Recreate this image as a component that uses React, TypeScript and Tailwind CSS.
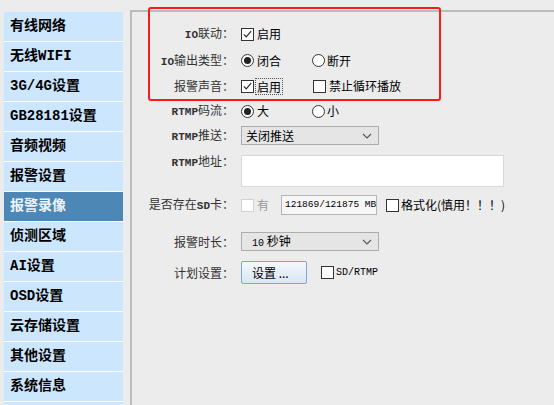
import type { ReactNode } from "react";

const navItems = [
  "有线网络",
  "无线WIFI",
  "3G/4G设置",
  "GB28181设置",
  "音频视频",
  "报警设置",
  "报警录像",
  "侦测区域",
  "AI设置",
  "OSD设置",
  "云存储设置",
  "其他设置",
  "系统信息",
];

function Latin({ children }: { children: ReactNode }) {
  return <span className="font-['Liberation_Mono',monospace] text-[11px] font-bold">{children}</span>;
}

function Mono({ children }: { children: ReactNode }) {
  return <span className="font-['Liberation_Mono',monospace] text-[10px]">{children}</span>;
}

function Label({ children, className = "" }: { children: ReactNode; className?: string }) {
  return (
    <div className={`mr-[7px] w-[102px] shrink-0 text-right text-[12px] text-[#333] ${className}`}>{children}</div>
  );
}

function Check({ checked, disabled }: { checked?: boolean; disabled?: boolean }) {
  return (
    <span
      className={`inline-flex size-[13px] shrink-0 items-center justify-center border bg-white ${
        disabled ? "border-[#d2d2d2]" : "border-[#333]"
      }`}
    >
      {checked && (
        <svg viewBox="0 0 13 13" className="size-[11px]" aria-hidden>
          <path d="M2.2 6.4L5 9.3L10.8 2.6" stroke="#222" strokeWidth="1.3" fill="none" />
        </svg>
      )}
    </span>
  );
}

function Radio({ checked }: { checked?: boolean }) {
  return (
    <span className="inline-flex size-[13px] shrink-0 items-center justify-center rounded-full border border-[#333] bg-white">
      {checked && <span className="size-[7px] rounded-full bg-[#222]" />}
    </span>
  );
}

function Chevron() {
  return (
    <svg viewBox="0 0 10 6" className="h-[6px] w-[10px]" aria-hidden>
      <path d="M1 1L5 5L9 1" stroke="#555" strokeWidth="1.1" fill="none" />
    </svg>
  );
}

function Select({ children }: { children: ReactNode }) {
  return (
    <div className="flex h-[19px] w-[138px] items-center justify-between border border-[#adadad] bg-[#e5e5e5] pl-[4px] pr-[6px] text-[12px] text-black">
      <span>{children}</span>
      <Chevron />
    </div>
  );
}

export default function App() {
  return (
    <div className="flex h-[405px] w-[554px] overflow-hidden bg-[#ececec] font-['Noto_Sans_CJK_SC',sans-serif]">
      <nav className="ml-[3px] mt-[11px] flex w-[120px] shrink-0 flex-col border-l border-t border-[#e4ecf3] bg-[#cce6fd]">
        {navItems.map((item) => (
          <div
            key={item}
            className={`flex h-[30px] shrink-0 items-center border-b border-white pl-[6px] text-[14px] font-bold font-['Liberation_Mono','Noto_Sans_CJK_SC',monospace] ${
              item === "报警录像" ? "bg-[#4c87b5] text-[#eef4fa]" : "text-black"
            }`}
          >
            {item}
          </div>
        ))}
      </nav>

      <main className="relative ml-[7px] mt-[10px] flex flex-1 flex-col border-l-2 border-t-2 border-[#bcbcbc] pt-[9px]">
        <div className="flex h-[26px] items-center">
          <Label>
            <Latin>IO</Latin>联动：
          </Label>
          <div className="flex items-center gap-[3px] text-[12px]">
            <Check checked />
            启用
          </div>
        </div>

        <div className="flex h-[27px] items-center">
          <Label>
            <Latin>IO</Latin>输出类型：
          </Label>
          <div className="flex w-[71px] items-center gap-[3px] text-[12px]">
            <Radio checked />
            闭合
          </div>
          <div className="flex items-center gap-[2px] text-[12px]">
            <Radio />
            断开
          </div>
        </div>

        <div className="flex h-[24px] items-center">
          <Label>报警声音：</Label>
          <div className="flex w-[72px] items-center gap-[1px] text-[12px]">
            <Check checked />
            <span className="border border-dotted border-[#555] px-[1px] leading-[15px]">启用</span>
          </div>
          <div className="flex items-center gap-[3px] text-[12px]">
            <Check />
            禁止循环播放
          </div>
        </div>

        <div className="flex h-[26px] items-center">
          <Label>
            <Latin>RTMP</Latin>码流：
          </Label>
          <div className="flex w-[71px] items-center gap-[3px] text-[12px]">
            <Radio checked />大
          </div>
          <div className="flex items-center gap-[2px] text-[12px]">
            <Radio />小
          </div>
        </div>

        <div className="flex h-[23px] items-center">
          <Label>
            <Latin>RTMP</Latin>推送：
          </Label>
          <Select>关闭推送</Select>
        </div>

        <div className="mt-[8px] flex items-start">
          <Label className="leading-[12px]">
            <Latin>RTMP</Latin>地址：
          </Label>
          <div className="h-[32px] w-[263px] border border-[#d9d9d9] bg-white" />
        </div>

        <div className="mt-[8px] flex h-[20px] items-center">
          <Label>
            是否存在<Latin>SD</Latin>卡：
          </Label>
          <div className="flex w-[40px] items-center gap-[3px] text-[12px] text-[#9a9a9a]">
            <Check disabled />有
          </div>
          <div className="flex h-[20px] w-[96px] items-center overflow-hidden whitespace-nowrap border border-[#b4b4b4] bg-[#f6f6f6] pl-[3px] font-['Liberation_Mono',monospace] text-[9.5px] text-black">
            121869/121875 MB
          </div>
          <div className="ml-[9px] flex items-center gap-[2px] text-[12px]">
            <Check />
            格式化(慎用！！！)
          </div>
        </div>

        <div className="mt-[17px] flex h-[19px] items-center">
          <Label>报警时长：</Label>
          <Select>
            <span className="pl-[6px]">
              <Mono>10</Mono> 秒钟
            </span>
          </Select>
        </div>

        <div className="mt-[10px] flex h-[23px] items-center">
          <Label>计划设置：</Label>
          <button className="flex h-[23px] w-[66px] items-center rounded-[2px] border border-[#7fa6cc] bg-gradient-to-b from-[#f4f8fc] to-[#d8e6f4] pl-[10px] text-[12px] text-black">
            设置 ...
          </button>
          <div className="ml-[14px] flex items-center gap-[2px] text-[12px]">
            <Check />
            <Mono>SD/RTMP</Mono>
          </div>
        </div>
      </main>

      <div className="pointer-events-none absolute left-[148px] top-[7px] h-[94px] w-[293px] rounded-[3px] border-[2.5px] border-[#ff1a1a]" />
    </div>
  );
}
